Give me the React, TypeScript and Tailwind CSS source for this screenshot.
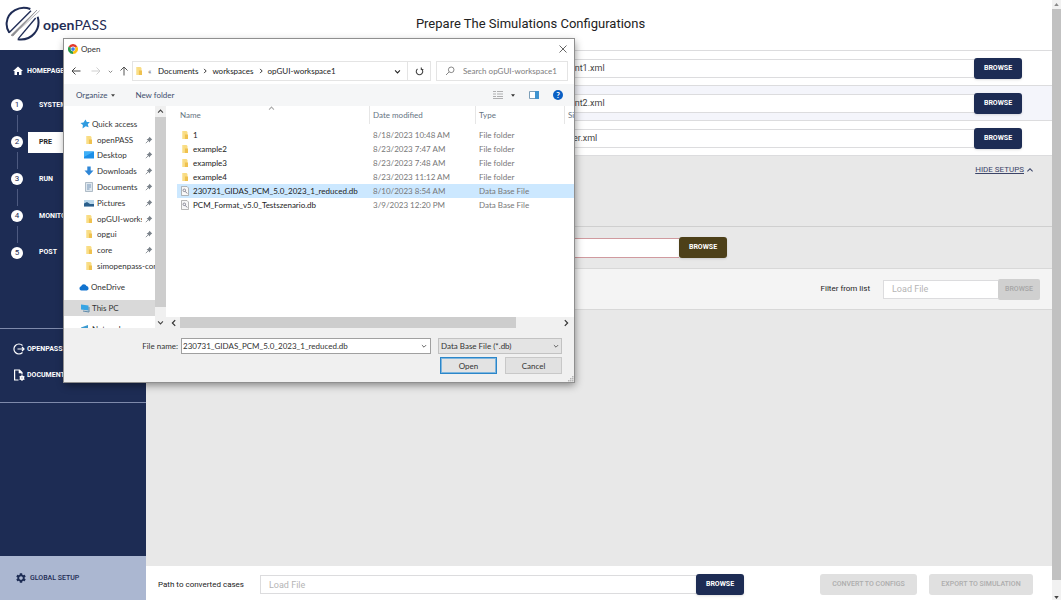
import React from "react";
import { MdHome, MdSettings, MdKeyboardArrowUp } from "react-icons/md";

function Chevron({ dir, className }: { dir: "down" | "up" | "left" | "right"; className?: string }) {
  const d = {
    down: "M1.5 3.5 5 7l3.5-3.5",
    up: "M1.5 6.5 5 3l3.5 3.5",
    left: "M6.5 1.5 3 5l3.5 3.5",
    right: "M3.5 1.5 7 5 3.5 8.5",
  }[dir];
  return (
    <svg viewBox="0 0 10 10" className={`shrink-0 ${className ?? ""}`} fill="none" stroke="currentColor" strokeWidth="1.5">
      <path d={d} />
    </svg>
  );
}

function LogoMark() {
  return (
    <svg viewBox="0 0 108 108" className="size-9 shrink-0" fill="none" aria-hidden="true">
      <path d="M76 9C45-3 8 16 5 50c-1 12 2 22 8 30" stroke="#1f2c55" strokeWidth="6" />
      <path d="M98 32c11 38-18 74-60 68" stroke="#1f2c55" strokeWidth="6" />
      <path d="M12 80 78 14" stroke="#1f2c55" strokeWidth="4" />
      <path d="M40 98 92 36" stroke="#1f2c55" strokeWidth="4" />
      <path d="M18 88 96 12 24 90z" fill="#8c8c90" stroke="#8c8c90" strokeWidth="2" />
      <path d="M46 68 104 14" stroke="#b4b4b9" strokeWidth="3" />
    </svg>
  );
}

function ChromeIcon() {
  return (
    <svg viewBox="0 0 48 48" className="size-[10px] shrink-0" aria-hidden="true">
      <path d="M24 24 3.2 12A24 24 0 0 1 44.8 12z" fill="#e33b2e" />
      <path d="M24 24 44.8 12A24 24 0 0 1 24 48z" fill="#fbc116" />
      <path d="M24 24V48A24 24 0 0 1 3.2 12z" fill="#2a9d48" />
      <circle cx="24" cy="24" r="11.5" fill="#fff" />
      <circle cx="24" cy="24" r="9" fill="#3f7fe8" />
    </svg>
  );
}

function Folder() {
  return (
    <svg viewBox="0 0 10 10" className="size-[10px] shrink-0" aria-hidden="true">
      <path d="M2 1h4.5l1 1v7H2z" fill="#f9dc82" />
      <path d="M5 4.5h3V9H5z" fill="#efc14f" />
      <path d="M2 1h1.2v8H2z" fill="#fbe7a6" />
    </svg>
  );
}

function DbFile() {
  return (
    <svg viewBox="0 0 10 10" className="size-[10px] shrink-0" aria-hidden="true">
      <path d="M1.5.5h5.5l1.5 1.500v7.500h-7z" fill="#f8f8f8" stroke="#9a9a9a" strokeWidth=".7" />
      <circle cx="4.300" cy="4.300" r="1.300" fill="none" stroke="#778" strokeWidth=".8" />
      <path d="m5.200 5.300 2 2.200" stroke="#778" strokeWidth=".9" />
    </svg>
  );
}

function Pin() {
  return (
    <svg viewBox="0 0 10 10" className="size-2 shrink-0" aria-hidden="true">
      <path d="m5.500 1 3.500 3.500-1 .4-1.600 1.600-.3 1.700L2 4.200l1.700-.4L5.200 2z" fill="#7a828a" />
      <path d="M3.800 6.200 1 9" stroke="#7a828a" strokeWidth="1" />
    </svg>
  );
}

const treeIcons: Record<string, React.ReactNode> = {
  star: <path d="M5.500.5 6.800 3l3 .1-2 2.200.8 3L5.700 7.200 2.500 9.500l.4-3.500L.5 4l3-.5z" fill="#2f9be0" />,
  desktop: <><path d="M0 1.500h10v7H0z" fill="#1c8fe8" /><path d="M0 1.500h10L0 7z" fill="#3fb0f7" /></>,
  download: <path d="M3.300.5h3.400v4H9.500L5 9.500.5 4.500h2.800z" fill="#2e86d6" />,
  document: <><path d="M1.500.5h7v9h-7z" fill="#dfe7ee" stroke="#93a3b1" strokeWidth=".7" /><path d="M3 3h4M3 5h4M3 7h2.500" stroke="#5a83ab" strokeWidth=".8" /></>,
  picture: <><path d="M0 2h10v6.500H0z" fill="#b8d6ea" /><path d="M0 8.500V5.500l3-1.500 3 2h4v2.500z" fill="#2a5f8c" /></>,
  cloud: <path d="M2.300 8.500a2.200 2.200 0 0 1-.2-4.300A3 3 0 0 1 7.600 4a2.300 2.300 0 0 1 .3 4.500z" fill="#1173cf" />,
  pc: <><path d="M1 1.500 8.500 2.500v5L1 6.500z" fill="#36a4e4" /><path d="m3 8 6 1V4" stroke="#5c88a8" fill="none" /></>,
  network: <path d="M1 3.500 8 1v5L1 8z" fill="#3c9bd0" />,
};

function TreeIcon({ kind }: { kind: string }) {
  if (kind === "folder") return <Folder />;
  return (
    <svg viewBox="0 0 10 10" className="size-[10px] shrink-0" aria-hidden="true">
      {treeIcons[kind]}
    </svg>
  );
}

const quick = [
  ["folder", "openPASS", true],
  ["desktop", "Desktop", true],
  ["download", "Downloads", true],
  ["document", "Documents", true],
  ["picture", "Pictures", true],
  ["folder", "opGUI-workspace1", true],
  ["folder", "opgui", true],
  ["folder", "core", true],
  ["folder", "simopenpass-core", false],
] as [string, string, boolean][];

const files = [
  ["1", "8/18/2023 10:48 AM", "File folder"],
  ["example2", "8/23/2023 7:47 AM", "File folder"],
  ["example3", "8/23/2023 7:48 AM", "File folder"],
  ["example4", "8/23/2023 11:12 AM", "File folder"],
  ["230731_GIDAS_PCM_5.0_2023_1_reduced.db", "8/10/2023 8:54 AM", "Data Base File"],
  ["PCM_Format_v5.0_Testszenario.db", "3/9/2023 12:20 PM", "Data Base File"],
];

const steps = ["SYSTEM", "PRE", "RUN", "MONITOR", "POST"];

function Sidebar() {
  return (
    <nav className="flex w-[146px] shrink-0 flex-col bg-[#1d2c54] text-[7px] font-bold text-white">
      <a href="#home" className="mt-[13px] flex h-4 items-center gap-[3px] pl-3">
        <MdHome className="size-3" />
        HOMEPAGE
      </a>
      <ol className="mt-2 grid h-[184px] grid-rows-5">
        {steps.map((s, i) => (
          <li key={s} className="flex">
            <div className="ml-[11px] flex w-3 shrink-0 flex-col items-center">
              <span className={`w-px flex-1 ${i ? "bg-[#4d5a80]" : ""}`} />
              <span className="my-1 flex size-3 items-center justify-center rounded-full bg-white text-[8px] font-normal text-[#1d2c54]">
                {i + 1}
              </span>
              <span className={`w-px flex-1 ${i < 4 ? "bg-[#4d5a80]" : ""}`} />
            </div>
            <a
              href={`#${s.toLowerCase()}`}
              className={`ml-[5px] flex h-[21px] flex-1 items-center self-center pl-[11px] ${
                s === "PRE" ? "bg-white text-[#222]" : ""
              }`}
            >
              {s}
            </a>
          </li>
        ))}
      </ol>
      <div className="mt-[57px] flex h-[75px] flex-col gap-2.5 border-y border-[#7e8aab] pt-3">
        <a href="#openpass" className="flex h-4 items-center gap-[3px] pl-[13px]">
          <svg viewBox="0 0 12 12" className="size-3 -mr-px" fill="none" stroke="currentColor" strokeWidth="1.200">
            <path d="M9.500 2.500a5 5 0 1 0 0 7M4.500 6H11M9 4l2 2-2 2" />
          </svg>
          OPENPASS
        </a>
        <a href="#docs" className="flex h-4 items-center gap-[3px] pl-[13px]">
          <svg viewBox="0 0 12 12" className="size-3 -mr-px" fill="none" stroke="currentColor" strokeWidth="1.200">
            <path d="M5.500 11H1.600V1h4.900L9 3.500v2M6.300 1v2.700H9" />
            <circle cx="9" cy="9" r="1.700" strokeWidth="1.400" />
            <path d="M9 6v6M6.400 7.500l5.200 3M6.400 10.500l5.200-3" strokeWidth=".7" />
          </svg>
          DOCUMENTATION
        </a>
      </div>
      <a href="#setup" className="mt-auto flex h-11 items-center gap-[3px] bg-[#abb7d1] pl-[15px] font-medium text-[#1d2c54]">
        <MdSettings className="size-3" />
        GLOBAL SETUP
      </a>
    </nav>
  );
}

const browse = "h-[21px] w-12 shrink-0 rounded-[3px] text-[7px] font-bold shadow-sm";

function FileRow({ label, value, shaded }: { label: string; value: string; shaded?: boolean }) {
  return (
    <div className={`flex h-[35px] items-center border-t border-[#dcdcde] pr-[30px] pl-[400px] ${shaded ? "bg-[#f4f5fb]" : "bg-white"}`}>
      <input
        aria-label={label}
        defaultValue={value}
        className="h-[19px] min-w-0 flex-1 border border-r-0 border-[#dcdcde] bg-white pl-3 text-[9px] text-[#444]"
      />
      <button className={`${browse} bg-[#1d2c54] text-white`}>BROWSE</button>
    </div>
  );
}

function Main() {
  return (
    <main className="flex min-w-0 flex-1 flex-col bg-[#e8e8e8]">
      <FileRow label="Agent 1" value="Agent1.xml" />
      <FileRow label="Agent 2" value="Agent2.xml" shaded />
      <FileRow label="Other" value="Other.xml" />
      <div className="flex h-[71px] items-start justify-end border-t border-[#dcdcde] pt-2 pr-4">
        <button className="flex items-center text-[8px] leading-3 text-[#3b4468]">
          <span className="underline">HIDE SETUPS</span>
          <MdKeyboardArrowUp className="size-3" />
        </button>
      </div>
      <div className="flex h-[42px] items-center border-t border-[#cfcfcf] pr-[325px] pl-[120px]">
        <input aria-label="PCM file" className="h-5 min-w-0 flex-1 border border-r-0 border-[#d09a9f] bg-white pl-2 text-[9px]" />
        <button className={`${browse} bg-[#4d4019] text-white shadow-md`}>BROWSE</button>
      </div>
      <div className="flex h-[42px] items-center justify-end border-y border-[#d8d8d8] bg-[#f4f4f4] pr-3">
        <label htmlFor="filter" className="mr-[13px] text-[8px] text-[#222]">Filter from list</label>
        <input
          id="filter"
          placeholder="Load File"
          className="h-[19px] w-[115px] border border-r-0 border-[#dcdcde] bg-white pl-2 text-[9px] placeholder:text-[#b5b5b5]"
        />
        <button disabled className="h-[21px] w-[42px] rounded-[2px] bg-[#d0d0d0] text-[7px] font-medium text-[#a6a6a6]">
          BROWSE
        </button>
      </div>
      <div className="flex-1" />
      <div className="flex h-[34px] items-center bg-white pt-[3px] pr-[19px] pl-3">
        <label htmlFor="path" className="mr-4 text-[8px] text-[#222]">Path to converted cases</label>
        <input
          id="path"
          placeholder="Load File"
          className="h-[19px] min-w-0 flex-1 border border-r-0 border-[#dcdcde] bg-white pl-2 text-[9px] placeholder:text-[#b5b5b5]"
        />
        <button className={`${browse} bg-[#1d2c54] text-white`}>BROWSE</button>
        <button disabled className="ml-[76px] h-[21px] w-[97px] rounded-[3px] bg-[#e0e0e0] text-[7px] font-medium text-[#adadad]">
          CONVERT TO CONFIGS
        </button>
        <button disabled className="ml-3 h-[21px] w-[104px] rounded-[3px] bg-[#e0e0e0] text-[7px] font-medium text-[#adadad]">
          EXPORT TO SIMULATION
        </button>
      </div>
    </main>
  );
}

function Tree() {
  return (
    <div className="flex w-[102px] shrink-0 overflow-hidden">
      <div className="min-w-0 flex-1 overflow-hidden whitespace-nowrap pt-2.5">
        <ul className="grid h-[158px] grid-cols-1 grid-rows-10">
          <li className="flex items-center gap-0.5 pl-4"><TreeIcon kind="star" />Quick access</li>
          {quick.map(([kind, name, pinned]) => (
            <li key={name} className="flex items-center gap-[3px] pl-5">
              <TreeIcon kind={kind} />
              <span className="min-w-0 flex-1 overflow-hidden">{name}</span>
              {pinned && <Pin />}
              {pinned && <span className="-ml-0.5 w-px" />}
            </li>
          ))}
        </ul>
        <div className="mt-[5px] flex h-4 items-center gap-0.5 pl-[15px]"><TreeIcon kind="cloud" />OneDrive</div>
        <div className="mt-[5px] flex h-4 items-center gap-0.5 bg-[#d9d9d9] pl-4"><TreeIcon kind="pc" />This PC</div>
        <div className="mt-[5px] flex h-4 items-center gap-0.5 pl-4"><TreeIcon kind="network" />Network</div>
      </div>
      <div className="flex w-[11px] flex-col items-center bg-[#f0f0f0] text-[#444]">
        <Chevron dir="up" className="my-0.5 size-[7px]" />
        <div className="w-full flex-1 bg-[#cdcdcd]" />
        <Chevron dir="down" className="mt-3 mb-0.5 size-[7px]" />
      </div>
    </div>
  );
}

function FileList() {
  return (
    <div className="flex min-w-0 flex-1 flex-col overflow-hidden">
      <div className="relative min-h-0 flex-1 overflow-hidden pl-[11px]">
        <Chevron dir="up" className="absolute -top-px left-[102px] size-[7px] text-[#aaa]" />
        <table className="w-full table-fixed border-collapse whitespace-nowrap text-left">
          <colgroup>
            <col />
            <col className="w-[106px]" />
            <col className="w-[89px]" />
            <col className="w-[10px]" />
          </colgroup>
          <thead>
            <tr className="text-[#66737f]">
              {["Name", "Date modified", "Type", "Size"].map((h, i) => (
                <th key={h} className="h-[22px] overflow-hidden p-0 align-top font-normal">
                  <div className={`h-[18px] pl-[3px] leading-[18px] ${i ? "border-l border-[#e6e6e6]" : ""}`}>{h}</div>
                </th>
              ))}
            </tr>
          </thead>
          <tbody>
            {files.map(([name, date, type], i) => (
              <tr key={name} className={`h-[14px] ${i === 4 ? "bg-[#cce8ff]" : ""}`}>
                <td className="p-0 pl-[3px]">
                  <span className="flex items-center gap-[3px] leading-[14px] text-[#222]">
                    {i < 4 ? <Folder /> : <DbFile />}
                    {name}
                  </span>
                </td>
                <td className="p-0 pl-1 leading-[14px] text-[#777]">{date}</td>
                <td className="p-0 pl-1 leading-[14px] text-[#777]">{type}</td>
                <td className="p-0" />
              </tr>
            ))}
          </tbody>
        </table>
      </div>
      <div className="flex h-[11px] items-center bg-[#f0f0f0] px-1 text-[#333]">
        <Chevron dir="left" className="size-2" />
        <div className="ml-0.5 h-full flex-1 bg-[#cdcdcd]" />
        <Chevron dir="right" className="ml-[46px] size-2" />
      </div>
    </div>
  );
}

function OpenDialog() {
  return (
    <section
      role="dialog"
      aria-label="Open"
      className="absolute top-[39px] left-16 flex h-[343px] w-[510px] flex-col bg-white font-[Lato,sans-serif] text-[8px] text-[#333] shadow-[1px_3px_8px_rgba(0,0,0,0.45)] ring-1 ring-[#8f8f8f]"
    >
      <div className="flex h-5 items-center gap-[3px] pr-1.5 pl-1">
        <ChromeIcon />
        <span className="flex-1">Open</span>
        <button aria-label="Close">
          <svg viewBox="0 0 10 10" className="size-2.5" stroke="#666" strokeWidth="1"><path d="m1.500 1.500 7 7m0-7-7 7" /></svg>
        </button>
      </div>

      <div className="flex h-6 items-center pr-1.5 pl-[7px]">
        <button aria-label="Back">
          <svg viewBox="0 0 10 10" className="size-[10px]" fill="none" stroke="#444"><path d="M9.500 5H1M4.500 1.500 1 5l3.500 3.500" /></svg>
        </button>
        <button aria-label="Forward" className="ml-[10px]">
          <svg viewBox="0 0 10 10" className="size-[10px]" fill="none" stroke="#cfcfcf"><path d="M.5 5H9M5.500 1.500 9 5 5.500 8.500" /></svg>
        </button>
        <button aria-label="Recent locations" className="ml-[7px]"><Chevron dir="down" className="size-[5px] text-[#666]" /></button>
        <button aria-label="Up" className="ml-1.5">
          <svg viewBox="0 0 10 10" className="size-[10px]" fill="none" stroke="#555"><path d="M5 9.500V1M1.500 4.500 5 1l3.500 3.500" /></svg>
        </button>
        <div className="ml-[3px] flex h-5 flex-1 items-center border border-[#e4e4e4] pl-px text-[#222]">
          <Folder />
          <span className="ml-1 w-2.5 text-[#666]">«</span>
          <span>Documents</span>
          <Chevron dir="right" className="mx-1 size-[6px]" />
          <span>workspaces</span>
          <Chevron dir="right" className="mx-1 size-[6px]" />
          <span>opGUI-workspace1</span>
          <Chevron dir="down" className="mr-[6px] ml-auto size-[7px]" />
          <button aria-label="Refresh" className="flex h-full w-[23px] items-center justify-center border-l border-[#e4e4e4]">
            <svg viewBox="0 0 10 10" className="size-[9px]" fill="none" stroke="#444" strokeWidth="1.200">
              <path d="M7.200 2.200A3.600 3.600 0 1 1 2.800 2.200M7 .5v2.300h2.300" />
            </svg>
          </button>
        </div>
        <div className="ml-[5px] flex h-5 w-[132px] items-center gap-2 border border-[#e4e4e4] pl-2">
          <svg viewBox="0 0 10 10" className="size-[10px]" fill="none" stroke="#888">
            <circle cx="6.200" cy="3.800" r="2.800" /><path d="M4.200 5.800 1 9" />
          </svg>
          <input aria-label="Search" placeholder="Search opGUI-workspace1" className="min-w-0 flex-1 placeholder:text-[#7c7c7c]" />
        </div>
      </div>

      <div className="mt-px flex h-[22px] items-center bg-[#f5f6f7] pr-[11px] pl-3 text-[#3f4f6d]">
        <button className="flex items-center gap-1">
          Organize
          <svg viewBox="0 0 6 4" className="h-[3px] w-1"><path d="M0 0h6L3 4z" fill="#444" /></svg>
        </button>
        <button className="ml-5">New folder</button>
        <button aria-label="View" className="ml-auto flex items-center gap-2">
          <svg viewBox="0 0 10 8" className="h-2 w-[10px]" stroke="#a8a8a8"><path d="M0 .5h3M4 .5h6M0 3h3M4 3h6M0 5.500h3M4 5.500h6M0 7.500h10" strokeWidth=".9" /></svg>
          <svg viewBox="0 0 6 4" className="h-[3px] w-1"><path d="M0 0h6L3 4z" fill="#333" /></svg>
        </button>
        <button aria-label="Preview pane" className="ml-[14px]">
          <svg viewBox="0 0 10 8" className="h-2 w-[10px]"><path d="M.5.5h9v7h-9z" fill="#fff" stroke="#7d9fb8" /><path d="M6 0h4v8H6z" fill="#3f93cf" /></svg>
        </button>
        <button aria-label="Help" className="ml-[14px] flex size-[10px] items-center justify-center rounded-full bg-[#0a5fc4] text-[8px] leading-none font-bold text-white">
          ?
        </button>
      </div>

      <div className="flex h-[222px]">
        <Tree />
        <FileList />
      </div>

      <div className="flex flex-1 flex-col bg-[#f0f0f0] pt-2.5 pr-3">
        <div className="flex items-center justify-end">
          <label htmlFor="filename" className="mr-[3px]">File name:</label>
          <div className="flex h-4 w-[250px] items-center border border-[#a0a0a0] bg-white pr-[3px]">
            <input id="filename" defaultValue="230731_GIDAS_PCM_5.0_2023_1_reduced.db" className="min-w-0 flex-1 pl-px" />
            <Chevron dir="down" className="size-[6px] text-[#555]" />
          </div>
          <div className="relative ml-[7px]">
            <select aria-label="File type" className="block h-4 w-[124px] appearance-none border border-[#c2c2c2] bg-[#e4e4e4] pl-0.5">
              <option>Data Base File (*.db)</option>
            </select>
            <Chevron dir="down" className="pointer-events-none absolute top-[5px] right-[3px] size-[6px] text-[#555]" />
          </div>
        </div>
        <div className="mt-[3px] flex justify-end gap-2">
          <button className="h-[17px] w-[57px] border border-[#2b86c9] bg-[#e3e3e3] outline -outline-offset-2 outline-[#7fb6de]">Open</button>
          <button className="h-[17px] w-[57px] border border-[#c8c8c8] bg-[#e1e1e1]">Cancel</button>
        </div>
        <svg viewBox="0 0 6 6" className="-mr-3 mt-auto size-[6px] self-end" fill="#b5b5b5">
          <path d="M4 0h1.500v1.500H4zM4 2h1.500v1.500H4zM2 2h1.500v1.500H2zM4 4h1.500v1.500H4zM2 4h1.500v1.500H2zM0 4h1.500v1.500H0z" />
        </svg>
      </div>
    </section>
  );
}

export default function App() {
  return (
    <div className="relative flex h-screen overflow-hidden bg-white font-[Roboto,sans-serif]">
      <div className="flex min-w-0 flex-1 flex-col">
        <header className="grid h-[50px] shrink-0 grid-cols-[1fr_auto_1fr] items-center pb-0.5 pl-[5px]">
          <a href="#top" className="flex items-center gap-0.5 font-[Lato,sans-serif] text-[14px] text-[#1f2c55]">
            <LogoMark />
            <span><b>open</b>PASS</span>
          </a>
          <h1 className="pl-1 text-[13px] text-[#222]">Prepare The Simulations Configurations</h1>
        </header>
        <div className="flex min-h-0 flex-1">
          <Sidebar />
          <Main />
        </div>
      </div>
      <div className="flex w-[9px] shrink-0 flex-col items-center bg-[#f1f1f1]">
        <svg viewBox="0 0 6 4" className="my-[3px] h-[3px] w-[5px] shrink-0"><path d="M0 4h6L3 0z" fill="#888" /></svg>
        <div className="w-full flex-1 bg-[#c1c1c1]" />
        <svg viewBox="0 0 6 4" className="mt-4 mb-px h-[3px] w-[5px] shrink-0"><path d="M0 0h6L3 4z" fill="#444" /></svg>
      </div>
      <OpenDialog />
    </div>
  );
}
